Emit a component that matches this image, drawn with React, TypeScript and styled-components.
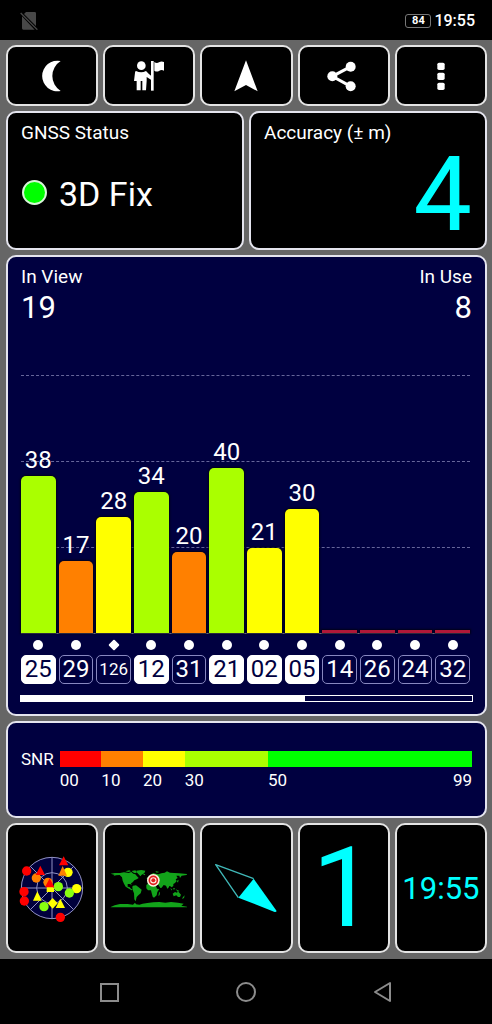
import React from 'react';
import styled, { createGlobalStyle } from 'styled-components';

const GlobalStyle = createGlobalStyle`
  *, *::before, *::after { box-sizing: border-box; }
  body {
    margin: 0;
    background: #000;
    color: #fff;
    font-family: Roboto, "Liberation Sans", sans-serif;
  }
  button { font: inherit; color: inherit; margin: 0; padding: 0; cursor: pointer; }
  h2, p { margin: 0; font-weight: 400; }
`;

const NAVY = '#000040';
const CYAN = '#00ffff';

const Screen = styled.div`
  min-height: 100vh;
  display: flex;
  flex-direction: column;
`;

const StatusBar = styled.header`
  height: 40px;
  padding: 0 17px 0 20px;
  display: flex;
  align-items: center;
  justify-content: space-between;
`;

const StatusRight = styled.div`
  display: flex;
  align-items: center;
  gap: 3px;
  padding-top: 2px;
  font-size: 16px;
  font-weight: 500;
  line-height: 20px;
`;

const Battery = styled.span`
  width: 26px;
  height: 14px;
  border: 1px solid #777;
  border-radius: 3px;
  font-size: 11px;
  line-height: 12px;
  font-weight: 700;
  text-align: center;
`;

const Dashboard = styled.main`
  flex: 1;
  display: flex;
  flex-direction: column;
  gap: 5px;
  padding: 5px 5px 6px 6px;
  background: #666;
`;

const Row = styled.div<{ $columns: number }>`
  display: grid;
  grid-template-columns: repeat(${(p) => p.$columns}, minmax(0, 1fr));
  gap: 5px;
`;

const Tile = styled.button<{ $height: number; $size?: number }>`
  height: ${(p) => p.$height}px;
  display: flex;
  align-items: center;
  justify-content: center;
  background: #000;
  border: 2px solid #e4e4e4;
  border-radius: 10px;
  color: ${CYAN};
  font-size: ${(p) => p.$size ?? 16}px;
  line-height: 1;
`;

const Panel = styled.section<{ $tone?: string; $height?: number }>`
  min-height: ${(p) => p.$height ?? 0}px;
  padding: 9px 13px 0;
  background: ${(p) => p.$tone ?? '#000'};
  border: 2px solid #e4e4ee;
  border-radius: 10px;
`;

const Title = styled.h2`
  font-size: 19px;
  line-height: 22px;
`;

const FixState = styled.p`
  display: flex;
  align-items: center;
  gap: 12px;
  margin-top: 33px;
  padding-left: 1px;
  font-size: 34px;
  line-height: 34px;
`;

const Dot = styled.span`
  width: 25px;
  height: 25px;
  margin-bottom: 3px;
  border-radius: 50%;
  border: 2px solid #d8f5d8;
  background: #00ff00;
`;

const Reading = styled.p`
  font-size: 104px;
  line-height: 102px;
  color: ${CYAN};
  text-align: right;
`;

const Counts = styled.div`
  display: flex;
  justify-content: space-between;
  margin-bottom: 47px;
`;

const Count = styled.div<{ $end?: boolean }>`
  text-align: ${(p) => (p.$end ? 'right' : 'left')};
`;

const CountValue = styled.p`
  font-size: 31px;
  line-height: 40px;
`;

const Plot = styled.div`
  display: grid;
  margin-right: 2px;
  border-bottom: 1px solid #9a9ab0;
  > * { grid-area: 1 / 1; }
`;

const GridLines = styled.div`
  display: grid;
  grid-template-rows: repeat(3, 86px);
`;

const GridLine = styled.div`
  border-top: 1px dashed #66669a;
`;

const SatelliteRow = styled.div<{ $align?: string }>`
  display: grid;
  grid-template-columns: repeat(12, minmax(0, 1fr));
  gap: 3px;
  align-items: ${(p) => p.$align ?? 'center'};
  justify-items: stretch;
`;

const BarColumn = styled.div`
  text-align: center;
  font-size: 24px;
  line-height: 24px;
`;

const Bar = styled.div<{ $level: number; $color: string }>`
  height: ${(p) => p.$level}px;
  margin-top: 4px;
  background: ${(p) => p.$color};
  border-radius: ${(p) => (p.$level > 5 ? '5px 5px 0 0' : '0')};
  box-shadow: 0 0 2px 1px #000018;
`;

const Markers = styled(SatelliteRow)`
  height: 21px;
  margin-right: 2px;
  justify-items: center;
`;

const Marker = styled.span<{ $diamond: boolean }>`
  width: ${(p) => (p.$diamond ? 8 : 10)}px;
  height: ${(p) => (p.$diamond ? 8 : 10)}px;
  background: #fff;
  border-radius: ${(p) => (p.$diamond ? '1px' : '50%')};
  transform: ${(p) => (p.$diamond ? 'rotate(45deg)' : 'none')};
`;

const Chips = styled(SatelliteRow)`
  margin-right: 2px;
`;

const Chip = styled.span<{ $used: boolean; $small: boolean }>`
  height: 29px;
  border: 1px solid ${(p) => (p.$used ? '#fff' : '#8888c0')};
  border-radius: 5px;
  background: ${(p) => (p.$used ? '#fff' : 'transparent')};
  color: ${(p) => (p.$used ? NAVY : '#fff')};
  font-size: ${(p) => (p.$small ? 17 : 24)}px;
  line-height: 27px;
  text-align: center;
`;

const ScrollTrack = styled.div`
  height: 7px;
  margin: 11px -1px 5px;
  border: 1px solid #fff;
`;

const ScrollThumb = styled.div`
  width: 63%;
  height: 100%;
  background: #fff;
`;

const Scale = styled.div`
  display: grid;
  grid-template-columns: auto 1fr;
  column-gap: 6px;
  row-gap: 1px;
  margin: 17px 0 0;
  align-items: center;
  font-size: 17px;
  line-height: 20px;
`;

const ScaleBar = styled.div`
  display: flex;
  height: 16px;
`;

const ScaleLabels = styled.div`
  grid-column: 2;
  display: flex;
`;

const ScalePart = styled.span<{ $span: number; $color?: string }>`
  flex: ${(p) => p.$span} 1 0;
  min-width: 0;
  display: flex;
  justify-content: space-between;
  background: ${(p) => p.$color ?? 'transparent'};
`;

const NavBar = styled.nav`
  height: 65px;
  padding: 0 41px;
  display: grid;
  grid-template-columns: repeat(3, 1fr);
`;

const NavButton = styled.button`
  display: flex;
  align-items: center;
  justify-content: center;
  background: none;
  border: 0;
`;

const LIME = '#aaff00';
const ORANGE = '#ff8000';
const YELLOW = '#ffff00';
const RED = '#b01838';

type Satellite = { id: string; snr?: number; level: number; color: string; used: boolean; augmented?: boolean };

const satellites: Satellite[] = [
  { id: '25', snr: 38, level: 157, color: LIME, used: true },
  { id: '29', snr: 17, level: 72, color: ORANGE, used: false },
  { id: '126', snr: 28, level: 116, color: YELLOW, used: false, augmented: true },
  { id: '12', snr: 34, level: 141, color: LIME, used: true },
  { id: '31', snr: 20, level: 81, color: ORANGE, used: false },
  { id: '21', snr: 40, level: 165, color: LIME, used: true },
  { id: '02', snr: 21, level: 85, color: YELLOW, used: true },
  { id: '05', snr: 30, level: 124, color: YELLOW, used: true },
  { id: '14', level: 3, color: RED, used: false },
  { id: '26', level: 3, color: RED, used: false },
  { id: '24', level: 3, color: RED, used: false },
  { id: '32', level: 3, color: RED, used: false },
];

const scaleParts = [
  { from: '00', span: 10, color: '#ff0000' },
  { from: '10', span: 10, color: ORANGE },
  { from: '20', span: 10, color: YELLOW },
  { from: '30', span: 20, color: LIME },
  { from: '50', to: '99', span: 49, color: '#00ff00' },
];

const toolbar = [
  {
    label: 'Night mode',
    art: <path d="M77 6A46 46 0 1 0 77 96A53 53 0 0 1 77 6Z" />,
  },
  {
    label: 'Guide',
    art: (
      <>
        <circle cx="28" cy="20" r="13" />
        <path d="M12 36Q28 44 42 36L50 44L58 51V63L44 54V65L42 94H31V66H26V94H14V66H6L9 41Q9 37 12 36Z" />
        <path d="M57 6H65V95H57Z" />
        <path d="M67 9Q74 15 81 10Q88 5 96 9V35Q88 31 81 36Q74 40 67 35Z" />
      </>
    ),
  },
  { label: 'Navigate', art: <path d="M51 4L86 97L51 78L16 97Z" /> },
  {
    label: 'Share',
    art: (
      <>
        <path d="M71 23L16 52L71 82" fill="none" stroke="#fff" strokeWidth="9" />
        <circle cx="71" cy="23" r="15" />
        <circle cx="16" cy="52" r="15" />
        <circle cx="71" cy="82" r="15" />
      </>
    ),
  },
  {
    label: 'More',
    art: (
      <>
        <rect x="40" y="11" width="22" height="22" rx="5" />
        <rect x="40" y="41" width="22" height="22" rx="5" />
        <rect x="40" y="71" width="22" height="22" rx="5" />
      </>
    ),
  },
];

const SkyView = () => (
  <svg width="72" height="72" viewBox="47 96 216 216" aria-hidden="true">
    <circle cx="155" cy="204" r="92" fill="#00003c" stroke="#9292c4" strokeWidth="3" />
    <circle cx="155" cy="204" r="46" fill="none" stroke="#9292c4" strokeWidth="3" />
    <path d="M155 112V296M63 204H247M90 139L220 269M220 139L90 269" stroke="#9292c4" strokeWidth="3" />
    <g fill="#ff8000">
      <circle cx="108" cy="174" r="14" />
      <circle cx="143" cy="187" r="14" />
    </g>
    <g fill="#ffff00">
      <path d="M139 216V202L150 194L161 204V216Z" />
      <circle cx="203" cy="157" r="14" />
      <circle cx="229" cy="206" r="14" />
      <path d="M111 214L124 242H98Z" />
      <path d="M157 234L172 250L157 266L142 250Z" />
      <path d="M180 236L194 264H166Z" />
    </g>
    <path d="M187 138L200 167H174Z" fill="#ff8000" />
    <g fill="#88ff10">
      <circle cx="174" cy="200" r="14" />
      <circle cx="207" cy="219" r="14" />
      <circle cx="131" cy="260" r="14" />
    </g>
    <g fill="#ff0000">
      <circle cx="79" cy="153" r="14" />
      <circle cx="71" cy="215" r="14" />
      <circle cx="72" cy="243" r="14" />
      <circle cx="180" cy="292" r="14" />
      <path d="M190 109L204 136H176Z" />
      <path d="M120 137L134 165H106Z" />
      <path d="M148 175L162 202H134Z" />
    </g>
  </svg>
);

const WorldMap = () => (
  <svg width="80" height="80" viewBox="33 84 240 240" aria-hidden="true">
    <g fill="#12a41a">
      <path d="M38 161L50 159L66 159L78 157L92 159L100 156L106 161L112 163L117 169L122 174L116 178L109 181L104 187L99 190L101 195L96 192L89 192L89 200L94 201L99 206L104 209L101 211L93 206L83 200L78 191L74 182L72 172L65 165L54 166L46 169L50 165Z" />
      <path d="M82 154L94 151L99 154L91 156ZM101 153L112 151L117 157L111 160L105 157Z" />
      <path d="M115 152L130 150L142 152L139 160L131 164L127 169L121 162L116 157Z" />
      <path d="M104 198L112 200L111 202L104 200Z" />
      <path d="M105 197L114 196L121 201L131 209L128 220L121 226L116 231L113 244L109 238L108 220L104 210L103 202Z" />
      <path d="M153 189L145 195L145 205L150 211L159 211L161 219L164 230L168 233L176 226L178 216L184 207L177 206L173 196L165 193Z" />
      <path d="M183 218L186 215L185 225L181 228Z" />
      <path d="M147 184L151 181L151 173L158 171L157 164L166 159L173 161L181 163L190 160L200 158L207 154L216 158L229 159L244 160L267 162L266 165L251 167L246 174L244 167L235 167L239 174L233 178L236 183L231 189L226 192L226 198L221 202L217 199L214 198L211 204L208 206L204 197L197 195L191 203L187 204L181 194L177 190L168 192L159 187Z" />
      <path d="M217 203L223 210L220 211ZM225 205L231 204L228 210ZM233 208L245 213L239 215ZM236 183L242 179L240 188ZM147 173L151 170L150 177L146 177Z" />
      <path d="M224 221L231 216L237 218L240 214L249 224L246 231L240 231L235 226L227 229Z" />
      <path d="M255 231L260 226L258 234L252 237Z" />
      <path d="M38 261L50 256L66 252L89 252L105 254L111 248L114 253L124 254L134 251L148 249L166 247L184 246L202 248L219 246L240 248L257 251L250 257L267 260V262H38Z" />
      <path d="M172 153L184 156L176 158ZM134 162L142 162L140 166Z" />
    </g>
    <circle cx="166" cy="181" r="19" fill="#fff0e0" />
    <circle cx="166" cy="181" r="12" fill="none" stroke="#e02020" strokeWidth="5" />
    <circle cx="166" cy="181" r="6" fill="#e02020" />
  </svg>
);

const Compass = () => (
  <svg width="68" height="68" viewBox="52 102 204 204" aria-hidden="true">
    <path d="M131 233L63 134L177 176" fill="none" stroke="#40b8b8" strokeWidth="4" strokeLinejoin="round" />
    <path d="M177 176L246 273Q244 277 238 275L131 233Z" fill={CYAN} />
  </svg>
);

export default function App() {
  return (
    <>
      <GlobalStyle />
      <Screen>
        <StatusBar>
          <svg width="18" height="19" viewBox="0 0 54 57" role="img" aria-label="No SIM card">
            <path d="M18 3H44Q48 3 48 7V45L12 9ZM6 16L44 56H10Q6 56 6 52Z" fill="#484848" />
            <path d="M2 6L52 56" stroke="#484848" strokeWidth="4" />
          </svg>
          <StatusRight>
            <Battery>84</Battery>
            <span>19:55</span>
          </StatusRight>
        </StatusBar>

        <Dashboard>
          <Row $columns={5}>
            {toolbar.map((item) => (
              <Tile key={item.label} $height={61} aria-label={item.label}>
                <svg width="34" height="34" viewBox="0 0 102 102" fill="#fff" aria-hidden="true">
                  {item.art}
                </svg>
              </Tile>
            ))}
          </Row>

          <Row $columns={2}>
            <Panel $height={139}>
              <Title>GNSS Status</Title>
              <FixState>
                <Dot />
                3D Fix
              </FixState>
            </Panel>
            <Panel $height={139}>
              <Title>Accuracy (± m)</Title>
              <Reading>4</Reading>
            </Panel>
          </Row>

          <Panel $tone={NAVY} $height={461}>
            <Counts>
              <Count>
                <Title>In View</Title>
                <CountValue>19</CountValue>
              </Count>
              <Count $end>
                <Title>In Use</Title>
                <CountValue>8</CountValue>
              </Count>
            </Counts>
            <Plot>
              <GridLines>
                <GridLine />
                <GridLine />
                <GridLine />
              </GridLines>
              <SatelliteRow $align="end">
                {satellites.map((s) => (
                  <BarColumn key={s.id}>
                    {s.snr}
                    <Bar $level={s.level} $color={s.color} />
                  </BarColumn>
                ))}
              </SatelliteRow>
            </Plot>
            <Markers>
              {satellites.map((s) => (
                <Marker key={s.id} $diamond={Boolean(s.augmented)} />
              ))}
            </Markers>
            <Chips>
              {satellites.map((s) => (
                <Chip key={s.id} $used={s.used} $small={s.id.length > 2}>
                  {s.id}
                </Chip>
              ))}
            </Chips>
            <ScrollTrack>
              <ScrollThumb />
            </ScrollTrack>
          </Panel>

          <Panel $tone={NAVY} $height={97}>
            <Scale>
              <span>SNR</span>
              <ScaleBar>
                {scaleParts.map((part) => (
                  <ScalePart key={part.from} $span={part.span} $color={part.color} />
                ))}
              </ScaleBar>
              <ScaleLabels>
                {scaleParts.map((part) => (
                  <ScalePart key={part.from} $span={part.span}>
                    <span>{part.from}</span>
                    {part.to && <span>{part.to}</span>}
                  </ScalePart>
                ))}
              </ScaleLabels>
            </Scale>
          </Panel>

          <Row $columns={5}>
            <Tile $height={130} aria-label="Sky view">
              <SkyView />
            </Tile>
            <Tile $height={130} aria-label="World map">
              <WorldMap />
            </Tile>
            <Tile $height={130} aria-label="Compass">
              <Compass />
            </Tile>
            <Tile $height={130} $size={112}>1</Tile>
            <Tile $height={130} $size={31}>19:55</Tile>
          </Row>
        </Dashboard>

        <NavBar>
          <NavButton aria-label="Recent apps">
            <svg width="22" height="22" viewBox="0 0 22 22" fill="none" stroke="#8c8c8c" strokeWidth="2" aria-hidden="true">
              <rect x="3" y="3" width="17" height="17" />
            </svg>
          </NavButton>
          <NavButton aria-label="Home">
            <svg width="22" height="22" viewBox="0 0 22 22" fill="none" stroke="#8c8c8c" strokeWidth="2" aria-hidden="true">
              <circle cx="11" cy="11" r="9" />
            </svg>
          </NavButton>
          <NavButton aria-label="Back">
            <svg width="22" height="22" viewBox="0 0 22 22" fill="none" stroke="#8c8c8c" strokeWidth="2" strokeLinejoin="round" aria-hidden="true">
              <path d="M18 2V20L3 11Z" />
            </svg>
          </NavButton>
        </NavBar>
      </Screen>
    </>
  );
}
